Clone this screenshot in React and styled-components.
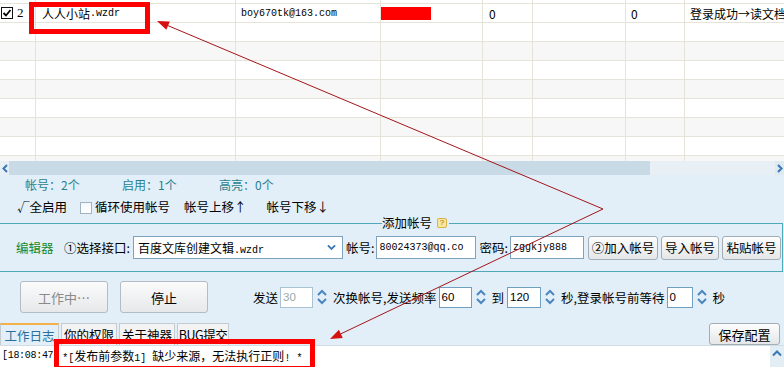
import React from 'react';
import styled, { createGlobalStyle } from 'styled-components';

const ui = `"Noto Sans CJK SC", "Microsoft YaHei", sans-serif`;
const mono = `"Liberation Mono", "Noto Sans CJK SC", monospace`;

const Global = createGlobalStyle`
  html, body { margin: 0; padding: 0; background: #fff; }
  * { box-sizing: border-box; }
`;

const Screen = styled.div`
  position: relative;
  width: 784px;
  height: 367px;
  overflow: hidden;
  font-family: ${ui};
  font-size: 12px;
  color: #000;
  background: #fff;
`;

/* ---------- account grid ---------- */
const Grid = styled.div`
  height: 161px;
  overflow: hidden;
  background: #fff;
`;

const GridInner = styled.div`
  margin-top: -15px;
`;

const Row = styled.div`
  display: grid;
  grid-template-columns: 36px 200px 145px 102px 50px 93px 59px 110px;
  height: 19px;
  background: ${p => (p.$shade ? '#f7f7f7' : '#fff')};
`;

const Cell = styled.div`
  display: flex;
  align-items: center;
  padding-left: ${p => p.$pad ?? 5}px;
  border-right: 1px solid #e6e4d8;
  border-bottom: 1px solid #e6e4d8;
  white-space: nowrap;
  overflow: hidden;
  font-family: ${p => (p.$mono ? mono : ui)};
  font-size: ${p => (p.$mono ? 10 : 12)}px;
`;

const Cjk = styled.span`
  font-family: ${ui};
  font-size: 12px;
`;

const Check = styled.span`
  display: inline-flex;
  align-items: center;
  justify-content: center;
  width: 12px;
  height: 12px;
  border: 1px solid #111;
  background: #fff;
  margin-right: 4px;
`;

const Num = styled.span`
  font-family: "Liberation Serif", serif;
  font-size: 13px;
`;

const RedBar = styled.span`
  display: block;
  width: 50px;
  height: 13px;
  background: #f00;
`;

/* ---------- horizontal scrollbar ---------- */
const HScroll = styled.div`
  display: flex;
  align-items: center;
  height: 14px;
  background: #e8f0f5;
`;

const ScrollArrow = styled.div`
  width: 9px;
  height: 14px;
  display: flex;
  align-items: center;
  justify-content: center;
  background: ${p => (p.$light ? '#dfe9f0' : 'transparent')};
`;

const Thumb = styled.div`
  width: 641px;
  height: 14px;
  background: #c8dae6;
`;

const Track = styled.div`
  flex: 1;
  height: 14px;
`;

/* ---------- control panel ---------- */
const Panel = styled.div`
  background: #e2eff8;
  height: 170px;
  display: flex;
  flex-direction: column;
`;

const Stats = styled.div`
  display: flex;
  height: 20px;
  line-height: 20px;
  padding-left: 25px;
  color: #2a7f8e;
  font-size: 12px;
`;

const Stat = styled.span`
  width: 97px;
`;

const Actions = styled.div`
  display: flex;
  align-items: center;
  height: 20px;
  margin-top: 1px;
  padding-left: 17px;
  font-size: 12.5px;
  gap: 13px;
`;

const BoxCheck = styled.span`
  display: inline-block;
  width: 12px;
  height: 12px;
  border: 1px solid #9fb3c4;
  background: linear-gradient(#f4f7fa, #fff);
  margin-right: 3px;
  vertical-align: -2px;
`;

const ActionLink = styled.span`
  margin-left: ${p => p.$gap || 0}px;
`;

const GroupBox = styled.fieldset`
  margin: 0 1px 0 -2px;
  padding: 5px 0 11px 18px;
  border: 1px solid #4fa8ba;
  border-left: none;
  min-width: 0;
`;

const Legend = styled.legend`
  margin-left: 366px;
  padding: 0 2px 0 0;
  font-size: 12.5px;
  line-height: 14px;
  display: flex;
  align-items: center;
  gap: 5px;
`;

const Help = styled.span`
  display: inline-flex;
  align-items: center;
  justify-content: center;
  width: 10px;
  height: 10px;
  border: 1px solid #d9b24a;
  border-radius: 2px;
  background: #fbe79a;
  color: #9a6a10;
  font-size: 8px;
  line-height: 1;
  font-family: "Liberation Sans", sans-serif;
`;

const EditRow = styled.div`
  display: flex;
  align-items: center;
  height: 25px;
  font-size: 12.5px;
`;

const Editor = styled.span`
  color: #18882a;
  width: 48px;
`;

const Select = styled.div`
  display: flex;
  align-items: center;
  justify-content: space-between;
  width: 210px;
  height: 23px;
  margin: 0 3px 0 3px;
  padding: 0 6px 0 4px;
  border: 1px solid #7ea4bd;
  background: #fff;
  font-family: ${mono};
  font-size: 10px;
`;

const TextBox = styled.div`
  display: flex;
  align-items: center;
  width: ${p => p.$w}px;
  height: 23px;
  margin: 0 3px 0 2px;
  padding-left: 2px;
  border: 1px solid #7ea4bd;
  background: #fff;
  font-family: ${mono};
  font-size: 10px;
  overflow: hidden;
  white-space: nowrap;
`;

const SmallButton = styled.div`
  display: flex;
  align-items: center;
  justify-content: center;
  width: ${p => p.$w}px;
  height: 24px;
  margin-left: ${p => p.$gap || 0}px;
  border: 1px solid #a3adb6;
  border-radius: 3px;
  background: linear-gradient(#fdfdfd, #e4e6e8);
  font-size: 12.5px;
  white-space: nowrap;
`;

const RunRow = styled.div`
  display: flex;
  align-items: center;
  height: 32px;
  margin-top: 9px;
  padding-left: 20px;
  font-size: 12.5px;
  white-space: nowrap;
`;

const BigButton = styled.div`
  display: flex;
  align-items: center;
  justify-content: center;
  width: 88px;
  height: 32px;
  margin-right: ${p => p.$gap || 0}px;
  border: 1px solid #b4bcc3;
  border-radius: 3px;
  background: linear-gradient(#fbfbfb, #e6e8ea);
  color: ${p => (p.$disabled ? '#8a8a8a' : '#000')};
  font-size: 13px;
`;

const NumBox = styled.div`
  display: flex;
  align-items: center;
  width: ${p => p.$w}px;
  height: 21px;
  margin-left: ${p => p.$gap ?? 2}px;
  padding-left: 2px;
  border: 1px solid ${p => (p.$disabled ? '#a9c3d3' : '#6fa0c0')};
  background: #fff;
  color: ${p => (p.$disabled ? '#9aa' : '#000')};
  font-family: "Liberation Sans", sans-serif;
  font-size: 11.5px;
`;

const Spin = styled.span`
  display: inline-flex;
  width: 14px;
  height: 20px;
  margin: 0 4px 0 2px;
`;

const Label = styled.span`
  margin-left: ${p => p.$gap || 0}px;
`;

const TabBar = styled.div`
  display: flex;
  align-items: flex-end;
  justify-content: space-between;
  height: 22px;
  margin-top: 10px;
`;

const Tabs = styled.div`
  display: flex;
  gap: 2px;
  height: 22px;
`;

const Tab = styled.div`
  display: flex;
  align-items: center;
  justify-content: center;
  width: ${p => p.$w}px;
  height: 22px;
  border: 1px solid #c4ccd2;
  border-bottom: none;
  border-top: ${p => (p.$active ? '2px solid #f2b04a' : '1px solid #c4ccd2')};
  background: ${p => (p.$active ? '#e2eff8' : '#f3f3f3')};
  color: ${p => (p.$active ? '#2a6f9e' : '#000')};
  font-size: 12.5px;
  white-space: nowrap;
  letter-spacing: ${p => (p.$tight ? '-0.5px' : '0')};
`;

const SaveButton = styled.div`
  display: flex;
  align-items: center;
  justify-content: center;
  width: 71px;
  height: 22px;
  margin-right: 4px;
  border: 1px solid #a3adb6;
  border-radius: 3px;
  background: linear-gradient(#fdfdfd, #e4e6e8);
  font-size: 13px;
`;

/* ---------- log ---------- */
const Log = styled.div`
  display: flex;
  justify-content: space-between;
  height: 22px;
  border-top: 1px solid #d3dde4;
  background: #fff;
`;

const LogLine = styled.div`
  display: flex;
  align-items: center;
  height: 18px;
  padding-left: 2px;
  font-family: ${mono};
  font-size: 10px;
  letter-spacing: -0.3px;
  white-space: nowrap;
`;

const LogMsg = styled.span`
  margin-left: 9px;
  letter-spacing: 0;
`;

const VScrollUp = styled.div`
  width: 14px;
  display: flex;
  justify-content: center;
  padding-top: 4px;
  background: #e3edf4;
`;

/* ---------- annotations (drawn over the screenshot) ---------- */
const Marker = styled.div`
  position: absolute;
  left: ${p => p.$x}px;
  top: ${p => p.$y}px;
  width: ${p => p.$w}px;
  height: ${p => p.$h}px;
  border: 5px solid #f00;
  pointer-events: none;
`;

const Arrows = styled.svg`
  position: absolute;
  left: 0;
  top: 0;
  pointer-events: none;
`;

const Chevron = ({ dir = 'down', color = '#3b78b5', size = 9 }) => {
  const paths = {
    down: 'M1 1.5 L5 5.5 L9 1.5',
    up: 'M1 5.5 L5 1.5 L9 5.5',
  };
  return (
    <svg width={size} height={size * 0.7} viewBox="0 0 10 7">
      <path d={paths[dir]} fill="none" stroke={color} strokeWidth="2" />
    </svg>
  );
};

const SideChevron = ({ left }) => (
  <svg width="6" height="9" viewBox="0 0 6 9">
    <path d={left ? 'M5 1 L1.5 4.5 L5 8' : 'M1 1 L4.5 4.5 L1 8'} fill="none" stroke="#3b78b5" strokeWidth="2" />
  </svg>
);

const Spinner = () => (
  <Spin>
    <svg width="14" height="20" viewBox="0 0 14 20">
      <path d="M3 8 L7 4 L11 8" fill="none" stroke="#4a86bf" strokeWidth="2" />
      <path d="M3 12 L7 16 L11 12" fill="none" stroke="#4a86bf" strokeWidth="2" />
    </svg>
  </Spin>
);

const Tick = () => (
  <svg width="10" height="10" viewBox="0 0 10 10">
    <path d="M1.5 5 L4 7.5 L8.5 2" fill="none" stroke="#000" strokeWidth="1.8" />
  </svg>
);

const columns = 8;

function EmptyRow({ shade }) {
  return (
    <Row $shade={shade}>
      {Array.from({ length: columns }).map((_, i) => <Cell key={i} />)}
    </Row>
  );
}

function Arrow({ from, to }) {
  const dx = to[0] - from[0];
  const dy = to[1] - from[1];
  const len = Math.hypot(dx, dy);
  const ux = dx / len;
  const uy = dy / len;
  const bx = to[0] - ux * 12;
  const by = to[1] - uy * 12;
  const head = `${to[0]},${to[1]} ${bx - uy * 4.5},${by + ux * 4.5} ${bx + uy * 4.5},${by - ux * 4.5}`;
  return (
    <g>
      <line x1={from[0]} y1={from[1]} x2={bx} y2={by} stroke="#a3151a" strokeWidth="1" />
      <polygon points={head} fill="#d41010" />
    </g>
  );
}

export default function App() {
  const blank = [false, true, false, true, false, true, false, true];
  return (
    <Screen>
      <Global />
      <Grid>
        <GridInner>
          <Row>
            <Cell $pad={1}><Check><Tick /></Check></Cell>
            {Array.from({ length: columns - 1 }).map((_, i) => <Cell key={i} />)}
          </Row>
          <Row>
            <Cell $pad={1}><Check><Tick /></Check><Num>2</Num></Cell>
            <Cell $mono $pad={6}><Cjk>人人小站</Cjk>.wzdr</Cell>
            <Cell $mono>boy670tk@163.com</Cell>
            <Cell $pad={0}><RedBar /></Cell>
            <Cell $pad={6}>0</Cell>
            <Cell />
            <Cell $pad={5}>0</Cell>
            <Cell>登录成功→读文档</Cell>
          </Row>
          {blank.map((s, i) => <EmptyRow key={i} shade={s} />)}
        </GridInner>
      </Grid>

      <HScroll>
        <ScrollArrow><SideChevron left /></ScrollArrow>
        <Thumb />
        <Track />
        <ScrollArrow $light><SideChevron /></ScrollArrow>
      </HScroll>

      <Panel>
        <Stats>
          <Stat>帐号：2个</Stat>
          <Stat>启用：1个</Stat>
          <Stat>高亮：0个</Stat>
        </Stats>
        <Actions>
          <span>√全启用</span>
          <span><BoxCheck />循环使用帐号</span>
          <ActionLink $gap={1}>帐号上移↑</ActionLink>
          <ActionLink $gap={7}>帐号下移↓</ActionLink>
        </Actions>

        <GroupBox>
          <Legend>添加帐号<Help>?</Help></Legend>
          <EditRow>
            <Editor>编辑器</Editor>
            <span>①选择接口:</span>
            <Select>
              <span><Cjk>百度文库创建文辑</Cjk>.wzdr</span>
              <Chevron dir="down" />
            </Select>
            <span>帐号:</span>
            <TextBox $w={100}>80024373@qq.co</TextBox>
            <span>密码:</span>
            <TextBox $w={74}>zggkjy888</TextBox>
            <SmallButton $w={70} $gap={1}>②加入帐号</SmallButton>
            <SmallButton $w={58} $gap={3}>导入帐号</SmallButton>
            <SmallButton $w={59} $gap={3}>粘贴帐号</SmallButton>
          </EditRow>
        </GroupBox>

        <RunRow>
          <BigButton $disabled $gap={12}>工作中…</BigButton>
          <BigButton>停止</BigButton>
          <Label $gap={45}>发送</Label>
          <NumBox $w={33} $disabled>30</NumBox>
          <Spinner />
          <span>次换帐号,发送频率</span>
          <NumBox $w={33}>60</NumBox>
          <Spinner />
          <span>到</span>
          <NumBox $w={34} $gap={3}>120</NumBox>
          <Spinner />
          <span>秒,登录帐号前等待</span>
          <NumBox $w={26}>0</NumBox>
          <Spinner />
          <span>秒</span>
        </RunRow>

        <TabBar>
          <Tabs>
            <Tab $w={59} $active>工作日志</Tab>
            <Tab $w={56}>你的权限</Tab>
            <Tab $w={56}>关于神器</Tab>
            <Tab $w={52} $tight>BUG提交</Tab>
          </Tabs>
          <SaveButton>保存配置</SaveButton>
        </TabBar>
      </Panel>

      <Log>
        <LogLine>
          [18:08:47
          <LogMsg>*[<Cjk>发布前参数</Cjk>1] <Cjk>缺少来源，无法执行正则</Cjk>! *</LogMsg>
        </LogLine>
        <VScrollUp><Chevron dir="up" size={10} /></VScrollUp>
      </Log>

      <Marker $x={29} $y={2} $w={121} $h={32} />
      <Marker $x={54} $y={339} $w={261} $h={32} />

      <Arrows width="784" height="367" viewBox="0 0 784 367">
        <Arrow from={[603, 209]} to={[157, 21]} />
        <Arrow from={[603, 209]} to={[330, 339]} />
      </Arrows>
    </Screen>
  );
}
